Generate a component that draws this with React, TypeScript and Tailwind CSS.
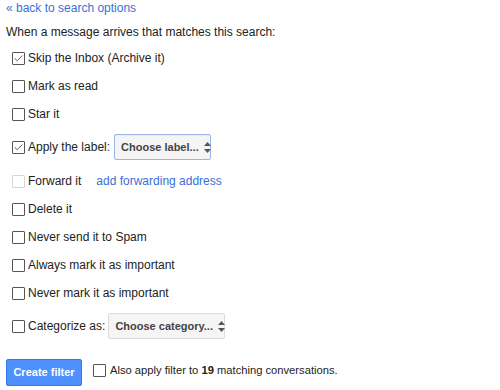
import { Check } from 'lucide-react';

const font = { fontFamily: '"Liberation Sans", Arial, sans-serif' };

function Box({ checked = false, disabled = false }: { checked?: boolean; disabled?: boolean }) {
  return (
    <span
      className={`flex h-[13px] w-[13px] shrink-0 items-center justify-center rounded-[1px] border bg-white ${
        disabled ? 'border-[#d6d6d6]' : 'border-[#555]'
      }`}
    >
      {checked && <Check className="h-[11px] w-[11px] text-[#555]" strokeWidth={2} />}
    </span>
  );
}

function Arrows() {
  return (
    <svg width="7" height="11" viewBox="0 0 7 11" className="ml-[5px] shrink-0">
      <path d="M3.5 0 L7 4 L0 4 Z" fill="#555" />
      <path d="M3.5 11 L7 7 L0 7 Z" fill="#555" />
    </svg>
  );
}

function Row({ label, checked, disabled, children }: { label: string; checked?: boolean; disabled?: boolean; children?: React.ReactNode }) {
  return (
    <div className="flex h-[28px] items-center pl-[6px]">
      <Box checked={checked} disabled={disabled} />
      <span className="ml-[3px] text-[12px] text-[#222]">{label}</span>
      {children}
    </div>
  );
}

export default function App() {
  return (
    <div className="h-[390px] w-[500px] bg-white pl-[6px]" style={font}>
      <div className="pt-[1px] text-[12px] leading-[15px] text-[#3a6fd6]">« back to search options</div>
      <div className="mt-[9px] text-[12px] leading-[15px] text-[#222]">When a message arrives that matches this search:</div>
      <div className="mt-[4px]">
        <Row label="Skip the Inbox (Archive it)" checked />
        <Row label="Mark as read" />
        <Row label="Star it" />
        <div className="flex h-[38px] items-center pl-[6px]">
          <Box checked />
          <span className="ml-[3px] text-[12px] text-[#222]">Apply the label:</span>
          <span className="ml-[4px] flex h-[26px] w-[97px] items-center whitespace-nowrap rounded-[2px] border border-[#9bb6e6] bg-[#f5f5f5] pl-[6px] text-[11px] font-bold text-[#444] shadow-[inset_0_1px_1px_rgba(0,0,0,0.05)]">
            Choose label...
            <Arrows />
          </span>
        </div>
        <div className="h-[1px]" />
        <Row label="Forward it" disabled>
          <span className="ml-[15px] text-[12px] text-[#3a6fd6]">add forwarding address</span>
        </Row>
        <Row label="Delete it" />
        <Row label="Never send it to Spam" />
        <Row label="Always mark it as important" />
        <Row label="Never mark it as important" />
        <div className="flex h-[38px] items-center pl-[6px]">
          <Box />
          <span className="ml-[3px] text-[12px] text-[#222]">Categorize as:</span>
          <span className="ml-[3px] flex h-[26px] w-[117px] items-center whitespace-nowrap rounded-[2px] border border-[#dcdcdc] bg-[#f5f5f5] pl-[6px] text-[11px] font-bold text-[#444]">
            Choose category...
            <Arrows />
          </span>
        </div>
      </div>
      <div className="mt-[14px] flex items-center">
        <button
          type="button"
          className="h-[27px] w-[76px] rounded-[2px] border border-[#3079ed] bg-[#4d90fe] text-[11px] font-bold text-white"
        >
          Create filter
        </button>
        <span className="ml-[11px] -mt-[4px] flex items-center">
          <Box />
          <span className="ml-[4px] text-[11.2px] text-[#222]">
            Also apply filter to <b>19</b> matching conversations.
          </span>
        </span>
      </div>
    </div>
  );
}
